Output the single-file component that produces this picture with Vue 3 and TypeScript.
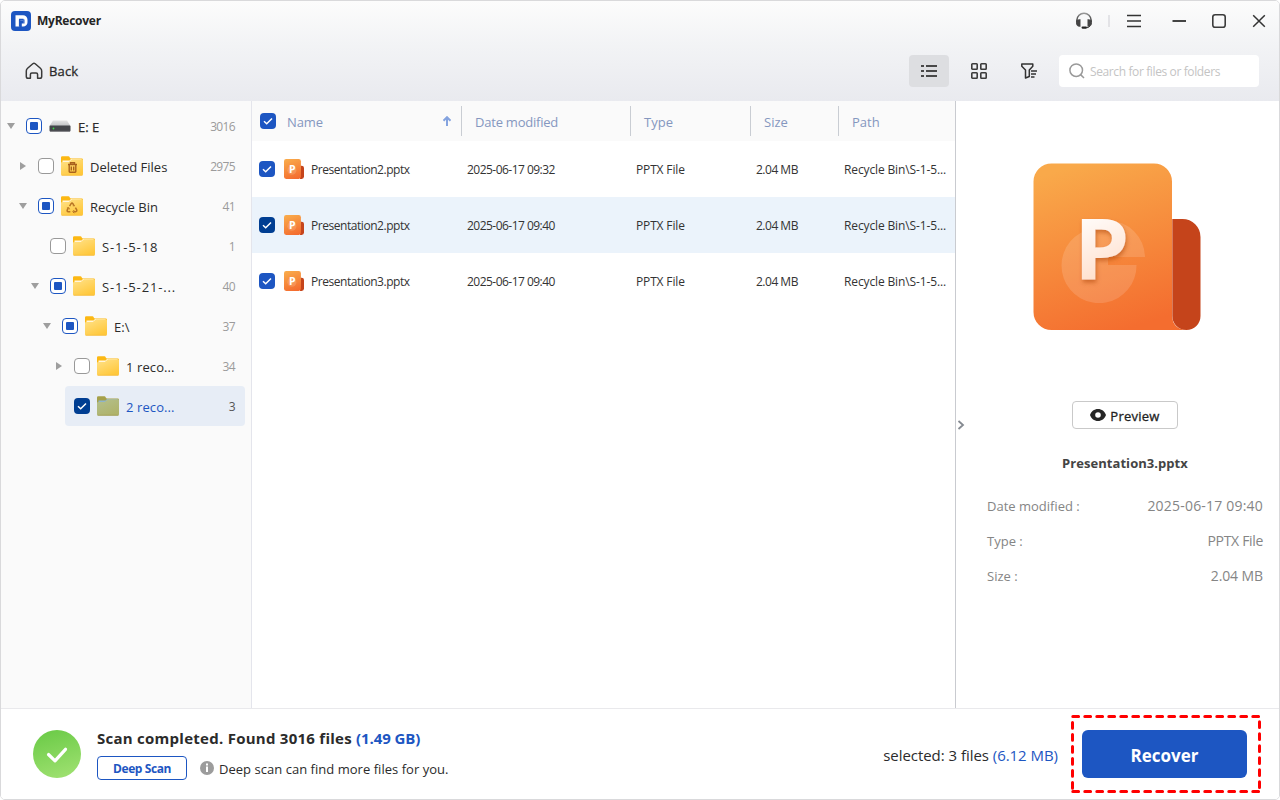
<script setup lang="ts">
type CheckState = 'none' | 'partial' | 'full'
type IconKind = 'drive' | 'trash' | 'recycle' | 'folder'

interface TreeNode {
  label: string
  count: string
  level: number
  arrow: 'down' | 'right' | ''
  check: CheckState
  icon: IconKind
  selected?: boolean
  cls: string
}

interface FileRow {
  name: string
  date: string
  type: string
  size: string
  path: string
  hover?: boolean
}

const tree: TreeNode[] = [
  { label: 'E: E', count: '3016', level: 0, arrow: 'down', check: 'partial', icon: 'drive', cls: 't-drive' },
  { label: 'Deleted Files', count: '2975', level: 1, arrow: 'right', check: 'none', icon: 'trash', cls: 't-deleted' },
  { label: 'Recycle Bin', count: '41', level: 1, arrow: 'down', check: 'partial', icon: 'recycle', cls: 't-recycle' },
  { label: 'S-1-5-18', count: '1', level: 2, arrow: '', check: 'none', icon: 'folder', cls: 't-sid' },
  { label: 'S-1-5-21-...', count: '40', level: 2, arrow: 'down', check: 'partial', icon: 'folder', cls: 't-sid' },
  { label: 'E:\\', count: '37', level: 3, arrow: 'down', check: 'partial', icon: 'folder', cls: 't-e' },
  { label: '1 reco...', count: '34', level: 4, arrow: 'right', check: 'none', icon: 'folder', cls: 't-reco' },
  { label: '2 reco...', count: '3', level: 4, arrow: '', check: 'full', icon: 'folder', selected: true, cls: 't-reco' },
]

const files: FileRow[] = [
  { name: 'Presentation2.pptx', date: '2025-06-17 09:32', type: 'PPTX File', size: '2.04 MB', path: 'Recycle Bin\\S-1-5...' },
  { name: 'Presentation2.pptx', date: '2025-06-17 09:40', type: 'PPTX File', size: '2.04 MB', path: 'Recycle Bin\\S-1-5...', hover: true },
  { name: 'Presentation3.pptx', date: '2025-06-17 09:40', type: 'PPTX File', size: '2.04 MB', path: 'Recycle Bin\\S-1-5...' },
]
</script>

<template>
  <div class="window">
    <header class="header">
      <div class="titlebar">
        <svg class="logo" width="20" height="20" viewBox="0 0 20 20">
          <rect width="20" height="20" rx="4" fill="#1d56c2" />
          <path d="M4.500 4.200h7.500a4.500 4.500 0 0 1 4.500 4.500v2.600a4.300 4.300 0 0 1-4.300 4.300h-1.400v-3h1.300V9.200H8.300v6.400H4.500z" fill="#fff" />
          <path d="M7.900 8.600h1.400v7H7.900zM12.200 8.600h1.300v4h-1.300zM8 7.800h4.500v1.300H8z" fill="#1d56c2" />
        </svg>
        <span class="app-name">MyRecover</span>
        <div class="win-controls">
          <svg width="192" height="22" viewBox="0 0 192 22" fill="none">
            <defs>
              <linearGradient id="hs" x1="0" y1="0" x2="0" y2="1">
                <stop offset="0" stop-color="#999" /><stop offset="1" stop-color="#222" />
              </linearGradient>
            </defs>
            <path d="M1.900 12V10.300a7.100 7.100 0 0 1 14.200 0V12" stroke="url(#hs)" stroke-width="1.500" />
            <path d="M5.500 9.300v7.400H4.600C2.500 16.700 1 15 1 13s1.500-3.700 3.600-3.700zM12.500 9.300v7.400h.9c2.100 0 3.600-1.700 3.600-3.700s-1.500-3.700-3.600-3.700z" fill="#444" />
            <path d="M15 15.800q-1 2-3.400 2" stroke="#333" stroke-width="1" />
            <rect x="6.500" y="16.500" width="5.500" height="2.200" rx="1.100" fill="#222" />
            <path d="M34 5v12" stroke="#dcdde0" stroke-width="1.500" />
            <path d="M52 5.500h14M52 11h14M52 16.500h14" stroke="#333" stroke-width="1.600" />
            <path d="M97.500 11h13.500" stroke="#444" stroke-width="1.800" />
            <rect x="137.800" y="4.800" width="12.400" height="12.400" rx="2.300" stroke="#3c3c3c" stroke-width="1.600" />
            <path d="M178.200 5.200l11.600 11.600M189.800 5.200l-11.600 11.600" stroke="#333" stroke-width="1.500" />
          </svg>
        </div>
      </div>
      <div class="toolbar">
        <button class="back">
          <svg width="18" height="18" viewBox="0 0 18 18" fill="none" stroke="#3a3a3a" stroke-width="1.500" stroke-linejoin="round">
            <path d="M2.600 6.300L7.800 1.700a1.800 1.800 0 0 1 2.400 0l5.200 4.600q1.300 1.100 1.300 2.600v5.600a1.800 1.800 0 0 1-1.800 1.800h-2.300V12.500a1.500 1.500 0 0 0-1.500-1.500H6.900a1.500 1.500 0 0 0-1.500 1.500v3.800H3.100a1.800 1.800 0 0 1-1.800-1.800V8.900q0-1.500 1.300-2.600z" />
          </svg>
          <span class="back-label">Back</span>
        </button>
        <div class="tools">
          <div class="tool active">
            <svg width="16" height="12" viewBox="0 0 16 12" fill="#484848">
              <path d="M0 0h3v2H0zM5 0h11v2H5zM0 5h3v2H0zM5 5h11v2H5zM0 10h3v2H0zM5 10h11v2H5z" />
            </svg>
          </div>
          <div class="tool">
            <svg width="16" height="16" viewBox="0 0 16 16" fill="none" stroke="#3c3c3c" stroke-width="1.600">
              <rect x=".8" y=".8" width="5.400" height="5.400" rx=".7" /><rect x="9.800" y=".8" width="5.400" height="5.400" rx=".7" />
              <rect x=".8" y="9.800" width="5.400" height="5.400" rx=".7" /><rect x="9.800" y="9.800" width="5.400" height="5.400" rx=".7" />
            </svg>
          </div>
          <div class="tool">
            <svg width="16" height="16" viewBox="0 0 16 16" fill="none" stroke="#333" stroke-width="1.500" stroke-linejoin="round">
              <path d="M.8 1h11v2.200L8.300 7v6.500L4.500 15V7L.8 3.200z" />
              <path d="M10 8h6M10 11h5M10 14h3.500" />
            </svg>
          </div>
        </div>
        <div class="search">
          <svg width="16" height="16" viewBox="0 0 16 16" fill="none" stroke="#9a9a9a" stroke-width="1.500">
            <circle cx="7.200" cy="7.200" r="6.300" /><path d="M11.600 11.600l3.400 3.400" />
          </svg>
          <span class="placeholder">Search for files or folders</span>
        </div>
      </div>
    </header>

    <main class="body">
      <aside class="sidebar">
        <div v-for="(n, i) in tree" :key="i" class="node" :style="{ marginLeft: 4 + n.level * 12 + 'px' }">
          <span class="twisty">
            <svg v-if="n.arrow === 'down'" width="8" height="6" viewBox="0 0 8 6"><path d="M0 0h8L4 6z" fill="#9e9e9e" /></svg>
            <svg v-else-if="n.arrow === 'right'" width="6" height="8" viewBox="0 0 6 8"><path d="M0 0v8l6-4z" fill="#9e9e9e" /></svg>
          </span>
          <div class="node-main" :class="{ selected: n.selected }">
            <span class="check" :class="[n.check, { dark: n.selected }]">
              <svg v-if="n.check === 'full'" width="16" height="16" viewBox="0 0 16 16"><path d="M4 8.200l2.700 2.600L12 5.500" fill="none" stroke="#fff" stroke-width="1.500" /></svg>
            </span>
            <svg v-if="n.icon === 'drive'" class="node-icon" width="22" height="22" viewBox="0 0 22 22">
              <defs><linearGradient id="dr" x1="0" y1="0" x2="0" y2="1"><stop offset="0" stop-color="#e4e4e4" /><stop offset="1" stop-color="#bfc1c3" /></linearGradient></defs>
              <path d="M4 5.500h14l3.500 5.500H.5z" fill="url(#dr)" />
              <rect x=".5" y="10.500" width="21" height="6" rx="1" fill="#44464a" />
              <path d="M1 16.300h20" stroke="#77797c" stroke-width=".8" />
              <circle cx="4.500" cy="13.500" r=".9" fill="#39d845" />
            </svg>
            <svg v-else class="node-icon" width="22" height="22" viewBox="0 0 22 22">
              <defs>
                <linearGradient id="fy" x1="0" y1="0" x2=".6" y2="1"><stop offset="0" stop-color="#ffe28a" /><stop offset="1" stop-color="#ffc83c" /></linearGradient>
                <linearGradient id="fs" x1="0" y1="0" x2=".6" y2="1"><stop offset="0" stop-color="#b4c08e" /><stop offset="1" stop-color="#afb36b" /></linearGradient>
              </defs>
              <path d="M0 2.500A1.300 1.300 0 0 1 1.300 1.200h6.200c1 0 1.500 2.300 2.600 2.300h10.600A1.300 1.300 0 0 1 22 4.800V12H0z" :fill="n.selected ? '#a5a04a' : '#fcb813'" />
              <path d="M1.500 5.500h7L10 4h10.500v4h-19z" :fill="n.selected ? '#8fb5cc' : '#fff6df'" />
              <path d="M0 8.200a1.300 1.300 0 0 1 1.300-1.300h6.500L11 4.300h9.700A1.300 1.300 0 0 1 22 5.600v13.700a1.300 1.300 0 0 1-1.300 1.300H1.300A1.300 1.300 0 0 1 0 19.300z" :fill="n.selected ? 'url(#fs)' : 'url(#fy)'" />
              <path d="M.6 20.300h20.800" :stroke="n.selected ? '#9c984b' : '#f3b93c'" stroke-width=".7" />
              <g v-if="n.icon === 'trash'" fill="none" stroke="#a8611d" stroke-width="1.400">
                <path d="M7 9.500h9M9.500 9.300V7.700h4v1.600M8.200 10v6.600q0 .7.700.7h5.200q.7 0 .7-.7V10M10.300 11.500v4M12.700 11.500v4" />
              </g>
              <g v-else-if="n.icon === 'recycle'" fill="none" stroke="#b87424" stroke-width="1.500">
                <path d="M8.600 11.200l1.500-2.500q.9-1.200 1.800 0l.9 1.600M14.400 12.600l1.300 2.300q.5 1.700-1.100 1.800h-2.100M9.300 16.700H7.300q-1.700-.2-1-1.800l1-1.700" />
                <path d="M11.800 10.800l2.200-.1M13.200 15l-1.400 1.700 1.400 1.500M5.900 13l1.900-.4.700 1.700" stroke-width="1" />
              </g>
            </svg>
            <span class="node-label" :class="n.cls">{{ n.label }}</span>
            <span class="node-count">{{ n.count }}</span>
          </div>
        </div>
      </aside>

      <section class="table">
        <div class="grid head">
          <div class="cell name-head">
            <span class="check full"><svg width="16" height="16" viewBox="0 0 16 16"><path d="M4 8.200l2.700 2.600L12 5.500" fill="none" stroke="#fff" stroke-width="1.500" /></svg></span>
            <span class="h-name">Name</span>
            <svg class="sort" width="8" height="10" viewBox="0 0 8 10"><path d="M4 10V1.200M.5 4.700L4 1.200l3.500 3.500" fill="none" stroke="#84a3df" stroke-width="2" /></svg>
          </div>
          <div class="cell"><span class="h-date">Date modified</span></div>
          <div class="cell"><span class="h-type">Type</span></div>
          <div class="cell"><span class="h-size">Size</span></div>
          <div class="cell last"><span class="h-path">Path</span></div>
        </div>
        <div v-for="(f, i) in files" :key="i" class="grid row" :class="{ hover: f.hover }">
          <div class="cell file">
            <span class="check full" :class="{ dark: f.hover }"><svg width="16" height="16" viewBox="0 0 16 16"><path d="M4 8.200l2.700 2.600L12 5.500" fill="none" stroke="#fff" stroke-width="1.500" /></svg></span>
            <svg class="pptx" width="20" height="20" viewBox="0 0 168 168">
              <path d="M139 56h9q20 0 20 20v72q0 20-20 20h-14z" fill="#c5441b" />
              <rect x="0" y="0" width="142" height="168" rx="18" fill="url(#pg)" />
              <circle cx="66" cy="94" r="38" fill="#fff" opacity=".15" />
              <text x="41" y="118" font-size="88" font-weight="700" fill="#fff">P</text>
            </svg>
            <span class="r-name">{{ f.name }}</span>
          </div>
          <div class="cell"><span class="r-date">{{ f.date }}</span></div>
          <div class="cell"><span class="r-type">{{ f.type }}</span></div>
          <div class="cell"><span class="r-size">{{ f.size }}</span></div>
          <div class="cell"><span class="r-path">{{ f.path }}</span></div>
        </div>
      </section>

      <aside class="preview">
        <svg class="collapse" width="8" height="10" viewBox="0 0 8 10"><path d="M1.500 1L6 5 1.500 9" fill="none" stroke="#858a91" stroke-width="1.800" /></svg>
        <svg class="big-icon" width="168" height="168" viewBox="0 0 168 168">
          <defs>
            <linearGradient id="pg" x1=".3" y1="0" x2=".6" y2="1"><stop offset="0" stop-color="#f9a94a" /><stop offset="1" stop-color="#f46d2f" /></linearGradient>
            <linearGradient id="pp" x1="0" y1="0" x2=".2" y2="1"><stop offset=".2" stop-color="#fff" /><stop offset="1" stop-color="#ffd9c2" /></linearGradient>
            <filter id="sh" x="-20%" y="-20%" width="150%" height="150%"><feDropShadow dx="1" dy="3" stdDeviation="2" flood-color="#a63c00" flood-opacity=".5" /></filter>
          </defs>
          <path d="M.5 18.500a18 18 0 0 1 18-18h102.500a18 18 0 0 1 18 18v134.500q1 13 14 14H18.500a18 18 0 0 1-18-18z" fill="url(#pg)" />
          <path d="M139.300 56h10.200a18 18 0 0 1 18 18v79a14 14 0 0 1-28.200 0z" fill="#c5441b" />
          <path d="M75 57.500a37 37 0 0 1 37 36.500H75v8h28.500a37.500 37.500 0 1 1-56-32z" fill="#fff" opacity=".14" />
          <text transform="translate(41 116) scale(1.050 1)" font-size="84" font-weight="700" fill="url(#pp)" filter="url(#sh)">P</text>
        </svg>
        <button class="preview-btn">
          <svg width="16" height="12" viewBox="0 0 16 12"><path d="M8 0c3.800 0 6.700 2.200 8 6-1.300 3.800-4.200 6-8 6S1.300 9.800 0 6c1.300-3.800 4.200-6 8-6zm0 3.200a2.800 2.800 0 1 0 0 5.600 2.800 2.800 0 0 0 0-5.600z" fill="#262626" fill-rule="evenodd" /></svg>
          <span class="preview-label">Preview</span>
        </button>
        <div class="file-title"><span class="ft">Presentation3.pptx</span></div>
        <div class="prop"><span class="p-date">Date modified :</span><span class="v-date">2025-06-17 09:40</span></div>
        <div class="prop"><span class="p-type">Type :</span><span class="v-type">PPTX File</span></div>
        <div class="prop"><span class="p-size">Size :</span><span class="v-size">2.04 MB</span></div>
      </aside>
    </main>

    <footer class="footer">
      <svg class="done" width="48" height="48" viewBox="0 0 48 48">
        <defs><linearGradient id="gr" x1=".3" y1="0" x2=".6" y2="1"><stop offset="0" stop-color="#6ccb48" /><stop offset="1" stop-color="#9de06f" /></linearGradient></defs>
        <circle cx="24" cy="24" r="24" fill="url(#gr)" />
        <path d="M15.500 24.500l6.500 6.300L32.500 19.300" fill="none" stroke="#fff" stroke-width="3.200" stroke-linecap="round" stroke-linejoin="round" />
      </svg>
      <div class="status">
        <div class="status-title"><span class="st">Scan completed. Found 3016 files <b>(1.49 GB)</b></span></div>
        <div class="status-sub">
          <button class="deep"><span class="deep-label">Deep Scan</span></button>
          <svg width="14" height="14" viewBox="0 0 14 14"><circle cx="7" cy="7" r="7" fill="#9c9c9c" /><path d="M6 2.500h2v2H6zM6 5.500h2v5.500H6z" fill="#fff" /></svg>
          <span class="hint">Deep scan can find more files for you.</span>
        </div>
      </div>
      <div class="selected-info"><span class="si">selected: 3 files <i>(6.12 MB)</i></span></div>
      <div class="recover-wrap">
        <svg class="dash" width="191" height="79" viewBox="0 0 191 79" fill="none" stroke="#f00" stroke-width="3" stroke-linecap="round" stroke-dasharray="5.800 6.200">
          <path d="M1.800 1.500H188.500" /><path d="M1.800 76.500H188.500" />
          <path d="M1.500 7.500V76.500" /><path d="M188.500 6.800V76.500" />
        </svg>
        <button class="recover"><span class="rec">Recover</span></button>
      </div>
    </footer>
  </div>
</template>

<style>
body { background: #fff; overflow: hidden; }
</style>

<style scoped>
.window { box-sizing: border-box; width: 1280px; height: 800px; border: 1px solid #d9d9db; border-radius: 5px; overflow: hidden; display: flex; flex-direction: column; background: #fff; font-family: "Open Sans", "Noto Sans", sans-serif; font-size: 13px; color: #2b2b2b; white-space: nowrap; }
.window *, .window *::before { box-sizing: border-box; }
button { font: inherit; color: inherit; border: 0; background: none; padding: 0; white-space: nowrap; }
svg { display: block; flex: none; }
span { display: block; }

.header { height: 100px; flex: none; background: linear-gradient(#fcfcfc, #f2f3f5 45%, #e9eaef); }
.titlebar { height: 40px; display: flex; align-items: center; padding: 0 12px 0 10px; }
.app-name { margin: -1px 0 0 6px; font-weight: 700; font-size: 12px; letter-spacing: -.25px; color: #252525; }
.win-controls { margin-left: auto; }
.toolbar { height: 60px; display: flex; align-items: center; padding: 0 20px 0 24px; }
.back { display: flex; align-items: center; gap: 6px; }
.back-label { font-size: 13px; font-weight: 500; letter-spacing: .15px; -webkit-text-stroke: .3px currentColor; }
.tools { margin-left: auto; display: flex; gap: 10px; }
.tool { width: 40px; height: 32px; border-radius: 4px; display: flex; align-items: center; justify-content: center; }
.tool.active { background: #dddee1; }
.search { width: 200px; height: 32px; margin-left: 10px; padding-left: 10px; background: #fff; border-radius: 4px; display: flex; align-items: center; gap: 5px; }
.placeholder { font-size: 12px; letter-spacing: -.38px; color: #c4c4c4; }

.body { height: 607px; flex: none; display: grid; grid-template-columns: 251px 703px 1fr; }
.sidebar { background: #fafafa; border-right: 1px solid #e4e5ec; padding-top: 5px; }
.node { height: 40px; display: flex; align-items: center; }
.twisty { width: 12px; padding-right: 1px; display: flex; justify-content: center; }
.node-main { flex: 1; height: 40px; margin-right: 6px; padding: 0 9px; display: flex; align-items: center; border-radius: 4px; }
.node-main.selected { background: #e7edf6; }
.node-icon { margin: 0 7px; }
.node-label { font-size: 13px; margin-top: 2px; }
.t-drive { -webkit-text-stroke: .25px currentColor; }
.t-sid { letter-spacing: .85px; }
.t-reco { letter-spacing: .1px; }
.selected .node-label { color: #1d56c2; }
.node-count { margin-left: auto; font-size: 12px; color: #9b9b9b; letter-spacing: -.65px; padding-right: 1px; }
.selected .node-count { color: #555; }

.check { width: 16px; height: 16px; border-radius: 4px; flex: none; display: grid; place-items: center; }
.check.none { border: 1px solid #999; background: #fff; }
.check.partial { border: 1px solid #1d56c2; background: #fff; }
.check.partial::before { content: ""; width: 8px; height: 8px; background: #1d56c2; border-radius: 1px; }
.check.full { background: #1d56c2; }
.check.dark { background: #003e92; }

.grid { display: grid; grid-template-columns: 210px 169px 120px 88px 116px; }
.head { height: 40px; background: #fafafa; align-items: center; color: #8597bf; font-size: 13px; }
.head .cell { height: 30px; margin-top: 0; padding: 2px 0 0 13px; border-right: 1px solid #c9cdd3; display: flex; align-items: center; position: relative; top: 0; }
.head { align-items: start; padding-top: 5px; }
.head .cell.last { border: 0; }
.head .name-head { padding: 0 10px 0 8px; }
.h-name { margin: 2px 0 0 11px; letter-spacing: -.1px; }
.h-date { letter-spacing: -.22px; }
.sort { margin-left: auto; }
.row { height: 56px; align-items: center; font-size: 12px; color: #333; }
.row.hover { background: #ebf3fb; }
.row .cell { padding: 1px 0 0 5px; display: flex; align-items: center; }
.row .file { padding: 0 0 0 7px; }
.pptx { margin: 0 7px 0 9px; }
.r-name { padding-top: 1px; letter-spacing: -.45px; }
.r-date { letter-spacing: -.53px; }
.r-type { letter-spacing: -.15px; }
.r-size { letter-spacing: -.5px; }
.r-path { letter-spacing: -.13px; }

.preview { position: relative; border-left: 1px solid #c9cbd0; padding: 62px 16px 0 31px; background: #fff; }
.collapse { position: absolute; left: 1px; top: 319px; }
.big-icon { margin: 0 0 0 46px; }
.preview-btn { display: flex; align-items: center; justify-content: center; gap: 4px; width: 106px; height: 28px; margin: 70px 0 0 85px; border: 1px solid #c9c9c9; border-radius: 4px; }
.preview-label { margin-top: 2px; letter-spacing: .25px; -webkit-text-stroke: .3px currentColor; color: #222; }
.file-title { height: 36px; margin-top: 16px; display: flex; align-items: center; justify-content: center; font-weight: 700; color: #444; }
.ft { letter-spacing: .05px; }
.prop { height: 35px; display: flex; align-items: center; justify-content: space-between; color: #858585; }
.file-title + .prop { margin-top: 7px; }
.v-date { font-size: 14px; letter-spacing: .2px; }
.v-type { font-size: 14px; letter-spacing: -.33px; }
.v-size { font-size: 14px; letter-spacing: -.1px; }

.footer { flex: 1; border-top: 1px solid #e9e9ec; display: flex; align-items: flex-start; background: #fff; }
.done { margin: 21px 0 0 32px; }
.status { margin: 17px 0 0 16px; }
.status-title { height: 24px; display: flex; align-items: center; font-size: 15px; font-weight: 700; }
.st { letter-spacing: .26px; }
.status-title b { color: #1d56c2; font-weight: inherit; letter-spacing: -.1px; }
.status-sub { margin-top: 6px; display: flex; align-items: center; height: 24px; }
.deep { width: 90px; height: 24px; border: 1px solid #1d56c2; border-radius: 4px; color: #1d56c2; font-weight: 700; font-size: 12px; display: flex; align-items: center; justify-content: center; margin-right: 13px; }
.deep-label { letter-spacing: -.4px; padding-top: 1px; }
.hint { margin-left: 5px; padding-top: 2px; font-size: 13px; letter-spacing: .03px; }
.selected-info { margin: 34px 13px 0 auto; height: 24px; display: flex; align-items: center; font-size: 15px; }
.si { letter-spacing: -.04px; }
.selected-info i { font-style: normal; color: #1d56c2; }
.recover-wrap { position: relative; width: 191px; height: 79px; margin: 6px 17px 0 0; padding: 15px 0 0 11px; }
.dash { position: absolute; left: 0; top: 0; }
.recover { width: 165px; height: 48px; border-radius: 6px; background: #1d56c2; color: #fff; font-size: 17px; font-weight: 700; display: flex; align-items: center; justify-content: center; }
.rec { padding-top: 2px; }
</style>
